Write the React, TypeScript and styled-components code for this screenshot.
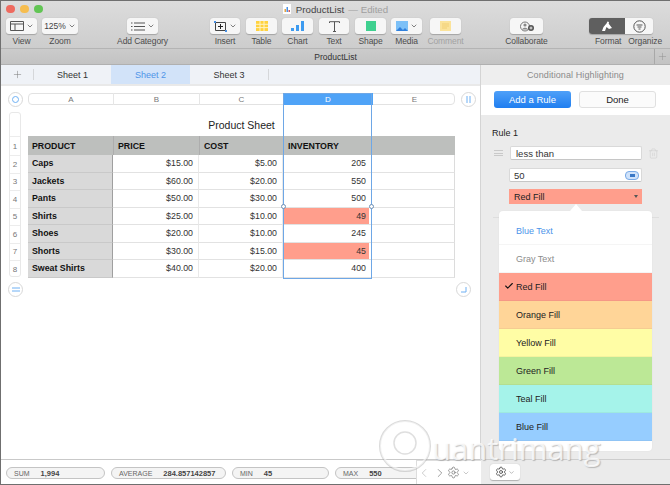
import React from "react";
import styled, { createGlobalStyle } from "styled-components";
import { ChevronDown, ChevronLeft, ChevronRight, Plus, Settings, Check, Trash2 } from "lucide-react";

const Global = createGlobalStyle`
  html, body { margin: 0; padding: 0; background: #fff; }
  body { font-family: "Liberation Sans", Arial, sans-serif; }
  * { box-sizing: border-box; }
`;

const Win = styled.div`
  position: relative; width: 670px; height: 485px; overflow: hidden; background: #fff;
  border-top: 1px solid #6f6f6f; border-left: 1px solid #6f6f6f; border-bottom: 1px solid #6f6f6f;
  display: flex; flex-direction: column; color: #222;
`;
const Chrome = styled.div`
  height: 48px; flex: none; background: linear-gradient(#dcdcdc, #cdcdcd);
  border-bottom: 1px solid #b4b4b4;
`;
const TitleRow = styled.div`
  height: 16px; display: grid; grid-template-columns: 1fr auto 1fr; align-items: center; padding: 0 5px;
`;
const Lights = styled.div` display: flex; gap: 5.5px; `;
const Light = styled.span<{ $c: string }>`
  width: 8.5px; height: 8.5px; border-radius: 50%; background: ${p => p.$c};
`;
const Title = styled.div`
  display: flex; align-items: center; gap: 4px; font-size: 9.7px; color: #444;
  & em { font-style: normal; color: #a0a0a0; }
  & svg { margin-right: 1px; }
`;
const Tools = styled.div` display: flex; padding: 1px 0 0 5px; `;
const Item = styled.div<{ $w: number; $ml?: number; $faded?: boolean }>`
  width: ${p => p.$w}px; margin-left: ${p => p.$ml ?? 0}px; flex: none;
  display: flex; flex-direction: column; align-items: center;
  color: ${p => (p.$faded ? "#a2a2a2" : "#4c4c4c")};
`;
const Btn = styled.div`
  width: 100%; height: 16px; background: #f6f6f6; border-radius: 3px;
  box-shadow: 0 .5px 1px rgba(0,0,0,.22);
  display: flex; align-items: center; justify-content: center; gap: 2px;
  font-size: 8.5px; color: #444;
`;
const Label = styled.div` margin-top: 2px; font-size: 8.5px; line-height: 10px; white-space: nowrap; letter-spacing: -.1px; `;
const Seg = styled.div`
  width: 64px; margin-left: 46px; flex: none; display: flex; flex-direction: column; color: #4c4c4c;
`;
const SegBtns = styled.div`
  height: 16px; display: flex; border-radius: 3px; overflow: hidden; box-shadow: 0 .5px 1px rgba(0,0,0,.22);
`;
const SegBtn = styled.div<{ $on?: boolean; $w: number }>`
  width: ${p => p.$w}px; display: flex; align-items: center; justify-content: center;
  background: ${p => (p.$on ? "#5f5f5f" : "#f6f6f6")};
`;
const SegLabels = styled.div`
  display: flex; margin-top: 2px; font-size: 8.5px; line-height: 10px; white-space: nowrap; gap: 7px; margin-left: 6px; letter-spacing: -.1px;
`;
const DocBar = styled.div`
  height: 16px; flex: none; position: relative; background: linear-gradient(#cbcbcb, #c3c3c3);
  border-bottom: 1px solid #b0b0b0; display: flex; align-items: center; justify-content: center;
  font-size: 8.5px; color: #333;
`;
const DocPlus = styled.div`
  position: absolute; right: 0; top: 0; bottom: 0; width: 16px; border-left: 1px solid #a8a8a8;
  display: flex; align-items: center; justify-content: center; color: #8c8c8c;
`;
const Main = styled.div` flex: 1; min-height: 0; display: flex; `;
const Left = styled.div`
  width: 480px; flex: none; display: flex; flex-direction: column; border-right: 1px solid #d4d4d4;
`;
const SheetBar = styled.div`
  height: 19px; flex: none; display: flex; align-items: stretch; background: #eff2f7;
  border-bottom: 0; font-size: 9px; color: #333;
`;
const SheetPlus = styled.div`
  width: 32px; display: flex; align-items: center; justify-content: center; color: #777;
`;
const Sep = styled.span` width: 1px; margin: 4px 0; background: #d5d7da; `;
const SheetTab = styled.div<{ $w: number; $on?: boolean }>`
  width: ${p => p.$w}px; display: flex; align-items: center; justify-content: center;
  background: ${p => (p.$on ? "#d2e3f9" : "transparent")}; color: ${p => (p.$on ? "#4f94e8" : "#333")};
`;
const Band = styled.div` height: 2px; flex: none; background: #e9e9e9; `;
const Canvas = styled.div`
  flex: 1; position: relative; padding-top: 7px; min-height: 0;
`;
const HeadRow = styled.div` display: flex; align-items: center; height: 12px; padding-left: 7px; `;
const Round = styled.div<{ $ml?: number }>`
  width: 15px; height: 15px; flex: none; border-radius: 50%; background: #fff; border: 1px solid #d8d8d8;
  margin-left: ${p => p.$ml ?? 0}px;
  display: flex; align-items: center; justify-content: center; color: #6fb0f3;
`;
const ColPill = styled.div`
  margin-left: 5px; display: flex; height: 12px; border: 1px solid #e2e2e2; border-radius: 4px; width: 427px;
`;
const ColCell = styled.div<{ $w: number; $on?: boolean }>`
  width: ${p => p.$w}px; flex: none; display: flex; align-items: center; justify-content: center;
  font-size: 8px; color: ${p => (p.$on ? "#fff" : "#777")}; background: ${p => (p.$on ? "#4fa3f7" : "transparent")};
  border-right: 1px solid ${p => (p.$on ? "#4fa3f7" : "#e6e6e6")};
  margin-top: -1px; margin-bottom: -1px;
  &:last-child { border-right: 0; }
`;
const Body = styled.div` display: flex; padding: 7px 0 0 8px; `;
const Gutter = styled.div`
  width: 12px; flex: none; border: 1px solid #e8e8e8; border-radius: 3px; height: 165px; padding-top: 23px;
  display: grid; grid-template-rows: 19px repeat(7, 17.5px);
`;
const RowNum = styled.div`
  display: flex; align-items: center; justify-content: center; font-size: 8px; color: #777;
  border-top: 1px solid #ececec;
`;
const TableArea = styled.div` margin-left: 7px; width: 427px; `;
const SheetTitle = styled.div`
  height: 24px; display: flex; align-items: center; justify-content: center; font-size: 10.5px; color: #222;
  padding-top: 2px;
`;
const Table = styled.div`
  display: grid; grid-template-columns: 85px 86px 84px 89px 83px;
  grid-template-rows: 19px repeat(7, 17.5px);
  font-size: 8.8px;
`;
const Head = styled.div<{ $line?: boolean }>`
  background: #bdbfbd; font-weight: bold; color: #111; display: flex; align-items: center; padding-left: 4px;
  border-left: ${p => (p.$line ? "1px solid #adadad" : "0")};
`;
const RowHead = styled.div`
  background: #d9d9d9; font-weight: bold; color: #111; display: flex; align-items: center; padding-left: 4px;
  border-bottom: 1px solid #c9c9c9; border-right: 1px solid #9f9f9f;
`;
const Cell = styled.div<{ $hot?: boolean; $edge?: boolean }>`
  display: flex; align-items: center; justify-content: flex-end; padding-right: 5px; color: #333;
  border-bottom: 1px solid #e2e2e2;
  border-right: 1px solid ${p => (p.$edge ? "#dcdcdc" : "#e9e9e9")};
  background: ${p => (p.$hot ? "#ff9e8c" : "#fff")};
  box-shadow: ${p => (p.$hot ? "inset -2px 0 #fff" : "none")};
`;
const Selection = styled.div`
  position: absolute; left: 282px; top: 7px; width: 89px; height: 186px;
  border: 1px solid #6ea7e6; pointer-events: none;
`;
const Handle = styled.span<{ $right?: boolean }>`
  position: absolute; top: 110px; width: 5px; height: 5px; border-radius: 50%; background: #fff;
  border: 1px solid #6d8fb5;
  ${p => (p.$right ? "right: -3px;" : "left: -3px;")}
`;
const FootRow = styled.div`
  display: flex; justify-content: space-between; padding: 4px 5px 0 7px; width: 475px;
`;
const Status = styled.div`
  height: 25px; flex: none; border-top: 1px solid #c9c9c9; display: flex; align-items: center; padding: 2px 0 0 5px;
  gap: 6px; background: #fff;
`;
const Pill = styled.div<{ $w: number }>`
  width: ${p => p.$w}px; flex: none; height: 12px; border-radius: 6px; border: 1px solid #c4c4c4;
  background: #f4f4f4; display: flex; align-items: center; padding-left: 7px; font-size: 7px; color: #666;
  & b { color: #444; margin-left: 11px; font-size: 7.5px; }
`;
const NavOver = styled.div`
  position: absolute; left: 415px; bottom: 0; width: 65px; height: 24px; background: #fff;
  border-top: 1px solid #ddd; border-left: 1px solid #ddd;
  display: flex; align-items: center; color: #777;
`;
const NavSpace = styled.span` width: 2px; flex: none; `;
const Right = styled.div`
  flex: 1; display: flex; flex-direction: column; background: #ebebeb; position: relative;
`;
const PanelHead = styled.div`
  height: 20px; flex: none; display: flex; align-items: center; justify-content: center;
  font-size: 9px; font-weight: 500; color: #8a8a8a; letter-spacing: .1px; background: #eeeeee;
`;
const ActionBand = styled.div`
  height: 30px; flex: none; background: #fff; display: flex; padding: 6px 13px 0 13px; gap: 8px;
`;
const BlueBtn = styled.div`
  width: 77px; height: 17px; border-radius: 3px; background: linear-gradient(#4fa0f8, #1f7ef0);
  color: #fff; display: flex; align-items: center; justify-content: center; font-size: 9.5px;
`;
const PlainBtn = styled.div`
  width: 77px; height: 17px; border-radius: 3px; background: #fbfbfb; border: 1px solid #e0e0e0;
  color: #222; display: flex; align-items: center; justify-content: center; font-size: 9.5px;
`;
const PanelBody = styled.div` flex: 1; padding: 13px 0 0 11px; `;
const RuleTitle = styled.div` font-size: 9px; color: #222; line-height: 11px; `;
const FieldRow = styled.div<{ $mt: number }>`
  display: flex; align-items: center; margin-top: ${p => p.$mt}px; padding-left: 2px; height: 14px;
`;
const Grip = styled.div`
  flex: none; height: 6px; border-top: 1px solid #c9c9c9; border-bottom: 1px solid #c9c9c9;
  position: relative; width: 9px; margin-right: 7px;
  &::after { content: ""; position: absolute; left: 0; right: 0; top: 1.5px; height: 1px; background: #c9c9c9; }
`;
const Field = styled.div`
  width: 132px; height: 14px; flex: none; background: #fff; border: 1px solid #d9d9d9; border-bottom-color: #c6c6c6; border-radius: 2px;
  font-size: 9.5px; color: #333; display: flex; align-items: center; padding-left: 5px; justify-content: space-between;
  padding-right: 2px;
`;
const ValueField = styled(Field)` margin-left: 15px; width: 133px; padding-left: 4px; `;
const RefChip = styled.span`
  width: 14px; height: 9px; border-radius: 4px; background: #cfe2fa; border: 1px solid #78a9e6;
  display: flex; align-items: center; justify-content: center;
  &::after { content: ""; width: 5px; height: 3px; background: #3a78c6; }
`;
const Trash = styled.div` margin-left: 6px; color: #c9c9c9; display: flex; `;
const FillSelect = styled.div`
  margin: 7px 0 0 17px; width: 133px; height: 15px; background: #ff9e8c; display: flex; align-items: center;
  justify-content: space-between; padding: 0 4px 0 5px; font-size: 9px; color: #222;
  &::after { content: ""; border-left: 2.5px solid transparent; border-right: 2.5px solid transparent; border-top: 3px solid #555; }
`;
const Rule = styled.div` height: 1px; background: #dedede; margin: 13px 11px 0 1px; `;
const Popup = styled.div`
  position: absolute; left: 18px; top: 146px; width: 153px; height: 240px; background: #fff; border-radius: 4px;
  padding-top: 6px; box-shadow: 0 0 2px rgba(0,0,0,.06);
  &::before {
    content: ""; position: absolute; left: 71px; top: -7px; border-left: 6px solid transparent; border-right: 6px solid transparent;
    border-bottom: 7px solid #fff;
  }
`;
const Opt = styled.div<{ $bg: string; $c: string }>`
  position: relative; height: 28px; background: ${p => p.$bg}; color: ${p => p.$c};
  display: flex; align-items: center; padding-left: 17px; font-size: 9px;
  border-bottom: 1px solid rgba(0,0,0,.04);
`;
const Tick = styled.span` position: absolute; left: 5px; top: 8px; color: #111; display: flex; `;
const PanelFoot = styled.div`
  height: 25px; flex: none; border-top: 1px solid #cdcdcd; padding: 4px 0 0 9px;
`;
const GearBtn = styled.div`
  width: 30px; height: 16px; background: #fff; border-radius: 3px; box-shadow: 0 .5px 1px rgba(0,0,0,.25);
  display: flex; align-items: center; justify-content: center; gap: 1px; color: #444;
`;
const Mark = styled.div`
  position: absolute; left: 377px; top: 418px; display: flex; align-items: flex-start;
  pointer-events: none; color: rgba(255,255,255,.78);
  & > svg { flex: none; }
`;
const MarkText = styled.div`
  margin: 15px 0 0 0; font-family: "Open Sans", sans-serif; font-size: 31px; line-height: 28px; font-weight: 400;
  white-space: nowrap; text-shadow: 1px 1px 1px rgba(110,110,110,.4);
`;

const Chev = () => <ChevronDown size={8} strokeWidth={2} color="#444" />;
const P = (props: { d: string; c?: string; w?: number }) => <path d={props.d} fill="none" stroke={props.c ?? "#555"} strokeWidth={props.w ?? 1} />;

const rows: [string, string, string, string, boolean][] = [
  ["Caps", "$15.00", "$5.00", "205", false],
  ["Jackets", "$60.00", "$20.00", "550", false],
  ["Pants", "$50.00", "$30.00", "500", false],
  ["Shirts", "$25.00", "$10.00", "49", true],
  ["Shoes", "$20.00", "$10.00", "245", false],
  ["Shorts", "$30.00", "$15.00", "45", true],
  ["Sweat Shirts", "$40.00", "$20.00", "400", false],
];
const options: [string, string, string][] = [
  ["Blue Text", "#fff", "#4d94ea"],
  ["Gray Text", "#fff", "#8c8c8c"],
  ["Red Fill", "#ff9e8c", "#222"],
  ["Orange Fill", "#ffd598", "#222"],
  ["Yellow Fill", "#fffda5", "#222"],
  ["Green Fill", "#bce896", "#222"],
  ["Teal Fill", "#a5f3ea", "#222"],
  ["Blue Fill", "#96cdff", "#222"],
];

export default function App() {
  return (
    <Win>
      <Global />
      <Chrome>
        <TitleRow>
          <Lights>
            <Light $c="#ee6a5f" /><Light $c="#f6bd4f" /><Light $c="#62c554" />
          </Lights>
          <Title>
            <svg width="8" height="10" viewBox="0 0 8 10"><rect width="8" height="10" fill="#fff" /><rect x="1.5" y="5" width="1.5" height="3" fill="#e8a33d" /><rect x="3.5" y="3" width="1.5" height="5" fill="#4a90e2" /><rect x="5.5" y="6" width="1.5" height="2" fill="#d05a5a" /></svg>
            <span>ProductList</span><em>— Edited</em>
          </Title>
          <span />
        </TitleRow>
        <Tools>
          <Item $w={31}><Btn>
            <svg width="14" height="10" viewBox="0 0 14 10"><P d="M.5.5h13v9H.5zM.5 3h13M5 3v6.5" /></svg><Chev />
          </Btn><Label>View</Label></Item>
          <Item $w={36} $ml={5}><Btn>125%<Chev /></Btn><Label>Zoom</Label></Item>
          <Item $w={31} $ml={49}><Btn>
            <svg width="14" height="9" viewBox="0 0 14 9"><P d="M3 1h11M3 4.5h11M3 8h11" /><P d="M0 1h1.5M0 4.5h1.5M0 8h1.5" /></svg><Chev />
          </Btn><Label>Add Category</Label></Item>
          <Item $w={30} $ml={52}><Btn>
            <svg width="13" height="11" viewBox="0 0 13 11"><P d="M1.5 1.5h10v8h-10z" c="#444" /><P d="M6.5 3v5M4 5.5h5" c="#222" /><rect x="0" y="0" width="2" height="2" fill="#4a90e2" /><rect x="11" y="9" width="2" height="2" fill="#4a90e2" /></svg><Chev />
          </Btn><Label>Insert</Label></Item>
          <Item $w={31} $ml={6}><Btn>
            <svg width="12" height="10" viewBox="0 0 12 10"><rect width="12" height="10" fill="#ffd23f" /><P d="M0 3.3h12M0 6.6h12M4 0v10M8 0v10" c="#fff3c4" /></svg>
          </Btn><Label>Table</Label></Item>
          <Item $w={31} $ml={5}><Btn>
            <svg width="13" height="10" viewBox="0 0 13 10"><rect x="0" y="7" width="3" height="3" fill="#3d9bf0" /><rect x="5" y="4" width="3" height="6" fill="#3d9bf0" /><rect x="10" y="0" width="3" height="10" fill="#3d9bf0" /></svg>
          </Btn><Label>Chart</Label></Item>
          <Item $w={30} $ml={6}><Btn>
            <svg width="11" height="11" viewBox="0 0 11 11"><P d="M.5 2V.7h10V2M5.5.7v10M4 10.5h3" c="#555" /></svg>
          </Btn><Label>Text</Label></Item>
          <Item $w={31} $ml={6}><Btn>
            <svg width="10" height="10" viewBox="0 0 10 10"><rect width="10" height="10" fill="#3fd08f" /></svg>
          </Btn><Label>Shape</Label></Item>
          <Item $w={31} $ml={5}><Btn>
            <svg width="12" height="10" viewBox="0 0 12 10"><rect width="12" height="10" fill="#7cc0f7" /><path d="M0 10l4-4 3 3 2-2 3 3z" fill="#2f7fdc" /></svg><Chev />
          </Btn><Label>Media</Label></Item>
          <Item $w={31} $ml={8} $faded><Btn>
            <svg width="11" height="10" viewBox="0 0 11 10"><rect width="11" height="10" fill="#fbe39a" /><P d="M2 3h7M2 5h7M2 7h5" c="#f1cf74" /></svg>
          </Btn><Label>Comment</Label></Item>
          <Item $w={33} $ml={49}><Btn>
            <svg width="14" height="11" viewBox="0 0 14 11"><circle cx="5" cy="5.5" r="4.5" fill="none" stroke="#777" /><circle cx="5" cy="4" r="1.6" fill="#888" /><path d="M2 8.5c1-2.4 5-2.4 6 0" fill="#888" /><circle cx="11" cy="7" r="3" fill="#555" /><path d="M11 5.5v3M9.5 7h3" stroke="#fff" strokeWidth=".8" /></svg>
          </Btn><Label>Collaborate</Label></Item>
          <Seg>
            <SegBtns>
              <SegBtn $on $w={36}>
                <svg width="12" height="11" viewBox="0 0 12 11"><path d="M1 10L2.5 6 5.5 2.5 6.5.5 8 1l-.3 1.8L11 7 8 8 5.5 6 4 10z" fill="#fff" /></svg>
              </SegBtn>
              <SegBtn $w={28}>
                <svg width="13" height="13" viewBox="0 0 13 13"><circle cx="6.5" cy="6.5" r="5.7" fill="none" stroke="#555" /><P d="M3.5 5h6M4.5 7h4M5.5 9h2" /></svg>
              </SegBtn>
            </SegBtns>
            <SegLabels><span>Format</span><span>Organize</span></SegLabels>
          </Seg>
        </Tools>
      </Chrome>
      <DocBar>
        ProductList
        <DocPlus><Plus size={11} strokeWidth={1} /></DocPlus>
      </DocBar>
      <Main>
        <Left>
          <SheetBar>
            <SheetPlus><Plus size={11} strokeWidth={1.1} /></SheetPlus>
            <Sep />
            <SheetTab $w={77}>Sheet 1</SheetTab>
            <SheetTab $w={79} $on>Sheet 2</SheetTab>
            <SheetTab $w={78}>Sheet 3</SheetTab>
            <Sep />
          </SheetBar>
          <Band />
          <Canvas>
            <HeadRow>
              <Round>
                <svg width="7" height="7" viewBox="0 0 7 7"><circle cx="3.5" cy="3.5" r="3" fill="none" stroke="#6fb0f3" /></svg>
              </Round>
              <ColPill>
                <ColCell $w={85}>A</ColCell>
                <ColCell $w={86}>B</ColCell>
                <ColCell $w={84}>C</ColCell>
                <ColCell $w={89} $on>D</ColCell>
                <ColCell $w={83}>E</ColCell>
              </ColPill>
              <Round $ml={6}>
                <svg width="5" height="7" viewBox="0 0 5 7"><P d="M1 0v7M4 0v7" c="#6fb0f3" /></svg>
              </Round>
            </HeadRow>
            <Body>
              <Gutter>
                {[1, 2, 3, 4, 5, 6, 7, 8].map(n => <RowNum key={n}>{n}</RowNum>)}
              </Gutter>
              <TableArea>
                <SheetTitle>Product Sheet</SheetTitle>
                <Table>
                  <Head>PRODUCT</Head>
                  <Head $line>PRICE</Head>
                  <Head $line>COST</Head>
                  <Head $line>INVENTORY</Head>
                  <Head />
                  {rows.map(r => (
                    <React.Fragment key={r[0]}>
                      <RowHead>{r[0]}</RowHead>
                      <Cell>{r[1]}</Cell>
                      <Cell>{r[2]}</Cell>
                      <Cell $hot={r[4]}>{r[3]}</Cell>
                      <Cell $edge />
                    </React.Fragment>
                  ))}
                </Table>
              </TableArea>
            </Body>
            <FootRow>
              <Round>
                <svg width="8" height="5" viewBox="0 0 8 5"><P d="M0 1h8M0 4h8" c="#6fb0f3" /></svg>
              </Round>
              <Round>
                <svg width="7" height="7" viewBox="0 0 7 7"><P d="M6 1v5H1" c="#6fb0f3" /></svg>
              </Round>
            </FootRow>
            <Selection>
              <Handle /><Handle $right />
            </Selection>
          </Canvas>
          <Status>
            <Pill $w={99}>SUM<b>1,994</b></Pill>
            <Pill $w={115}>AVERAGE<b>284.857142857</b></Pill>
            <Pill $w={97}>MIN<b>45</b></Pill>
            <Pill $w={96}>MAX<b>550</b></Pill>
          </Status>
          <NavOver>
            <ChevronLeft size={14} strokeWidth={1} color="#aaa" />
            <NavSpace />
            <ChevronRight size={14} strokeWidth={1.2} />
            <Settings size={13} strokeWidth={1.4} />
            <NavSpace />
            <ChevronDown size={8} strokeWidth={1.2} />
          </NavOver>
        </Left>
        <Right>
          <PanelHead>Conditional Highlighting</PanelHead>
          <ActionBand>
            <BlueBtn>Add a Rule</BlueBtn>
            <PlainBtn>Done</PlainBtn>
          </ActionBand>
          <PanelBody>
            <RuleTitle>Rule 1</RuleTitle>
            <FieldRow $mt={7}>
              <Grip />
              <Field>less than</Field>
              <Trash><Trash2 size={11} strokeWidth={1} /></Trash>
            </FieldRow>
            <FieldRow $mt={8}>
              <ValueField>50<RefChip /></ValueField>
            </FieldRow>
            <FillSelect>Red Fill</FillSelect>
            <Rule />
          </PanelBody>
          <Popup>
            {options.map(o => (
              <Opt key={o[0]} $bg={o[1]} $c={o[2]}>
                {o[0] === "Red Fill" && <Tick><Check size={10} strokeWidth={2.6} /></Tick>}
                {o[0]}
              </Opt>
            ))}
          </Popup>
          <PanelFoot>
            <GearBtn>
              <Settings size={12} strokeWidth={1.6} />
              <ChevronDown size={7} strokeWidth={1.2} />
            </GearBtn>
          </PanelFoot>
        </Right>
      </Main>
      <Mark>
        <svg width="54" height="54" viewBox="0 0 54 54">
          <circle cx="27" cy="27" r="25" fill="none" stroke="rgba(150,150,150,.35)" strokeWidth="2" />
          <circle cx="27" cy="27" r="24" fill="none" stroke="rgba(255,255,255,.6)" strokeWidth="2" />
          <circle cx="27" cy="24" r="11" fill="none" stroke="rgba(150,150,150,.3)" strokeWidth="1.5" />
        </svg>
        <MarkText>uantrimang</MarkText>
      </Mark>
    </Win>
  );
}
